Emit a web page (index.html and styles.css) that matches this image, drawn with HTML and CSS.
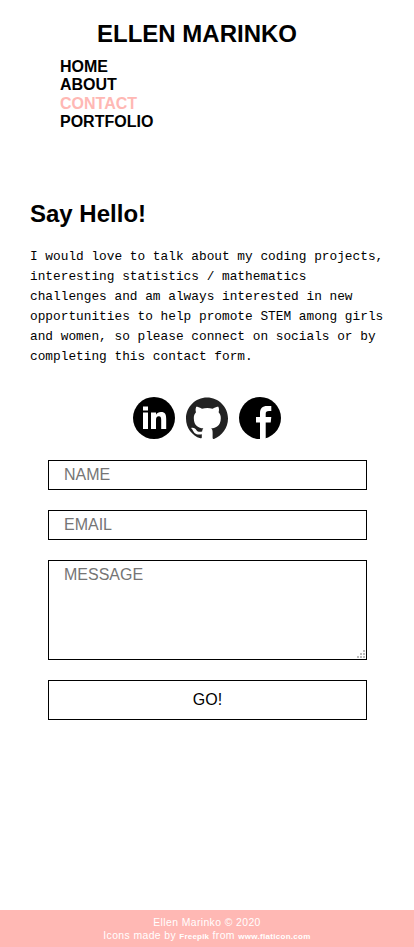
FILE: index.html
```html
<!DOCTYPE html>
<html lang="en">
<head>
<meta charset="utf-8">
<meta name="viewport" content="width=device-width, initial-scale=1">
<title>Ellen Marinko</title>
<link rel="stylesheet" href="styles.css">
</head>
<body>
<header>
  <h1>ELLEN MARINKO</h1>
  <nav>
    <a href="#">HOME</a>
    <a href="#">ABOUT</a>
    <a href="#" class="active">CONTACT</a>
    <a href="#">PORTFOLIO</a>
  </nav>
</header>
<main>
  <h2>Say Hello!</h2>
  <p>I would love to talk about my coding projects, interesting statistics / mathematics challenges and am always interested in new opportunities to help promote STEM among girls and women, so please connect on socials or by completing this contact form.</p>
  <div class="socials">
    <a href="#" aria-label="LinkedIn"><svg viewBox="0 0 42 42"><circle cx="21" cy="21" r="21"/><path fill="#fff" d="M10 15.500h5V32h-5zM10 9.500h5v4h-5zM18 15.500h5v2.300c1-1.700 2.700-2.700 5-2.700 4.200 0 5.200 2.600 5.200 7V32h-5v-8.800c0-2.400-.4-4-2.300-4-2.200 0-2.900 1.500-2.900 4V32h-5z"/></svg></a>
    <a href="#" aria-label="GitHub"><svg viewBox="0 0 42 42"><path fill="#222" d="M21 .4C9.400.4 0 9.800 0 21.400c0 9.300 6 17.200 14.400 19.900 1.100.2 1.400-.4 1.400-1v-3c-5.800 1.300-7.900-1.700-8.600-3.300-.8-1.700-1.600-2.400-2.200-3 2.600-1 4.500.700 5.500 2.200 1.200 1.800 3.200 2 5.600 1.300.2-1.400.7-2.700 1.300-3.200-4.700-.5-9.600-2.300-9.600-10.400 0-2.300.8-4.200 2.200-5.600-.2-.6-.9-2.700.2-5.600 0 0 1.800-.6 5.800 2.100a20 20 0 0 1 10.600 0c4-2.700 5.800-2.100 5.800-2.100 1.100 2.900.4 5 .2 5.600 1.400 1.400 2.200 3.300 2.200 5.600 0 8.100-4.900 9.900-9.600 10.400.8.700 1.400 1.900 1.400 3.900v5.800c0 .6.400 1.200 1.400 1C36 38.600 42 30.700 42 21.400 42 9.800 32.600.4 21 .4z"/></svg></a>
    <a href="#" aria-label="Facebook"><svg viewBox="0 0 42 42"><circle cx="21" cy="21" r="21"/><path fill="#fff" d="M21 43V25.500h-4v-5.500H21v-3.800C21 11.400 23.500 9 28 9h4.300v5h-2.300c-2.500 0-3.300.8-3.300 3v3h5.600l-.6 5.500H26.700V43z"/></svg></a>
  </div>
  <form>
    <input type="text" placeholder="NAME">
    <input type="email" placeholder="EMAIL">
    <div class="message">
      <textarea placeholder="MESSAGE"></textarea>
      <svg class="grip" viewBox="0 0 8 8"><path d="M0 6h2v2H0zM3 6h2v2H3zM6 6h2v2H6zM3 3h2v2H3zM6 3h2v2H6zM6 0h2v2H6z"/></svg>
    </div>
    <button type="button">GO!</button>
  </form>
</main>
<footer>
  <div>Ellen Marinko © 2020</div>
  <div>Icons made by <a href="#">Freepik</a> from <a href="#" class="site">www.flaticon.com</a></div>
</footer>
</body>
</html>
```
FILE: styles.css
```css
* { box-sizing: border-box; }
body {
  margin: 0;
  min-height: 947px;
  display: flex;
  flex-direction: column;
  background: #fff;
  color: #000;
  font-family: "Liberation Sans", Arial, sans-serif;
}
a { color: inherit; text-decoration: none; }
h1 {
  margin: 20px 20px 0 0;
  font-size: 24px;
  line-height: 28px;
  text-align: center;
}
nav {
  display: flex;
  flex-direction: column;
  margin: 10px 0 0 60px;
  font-size: 16px;
  font-weight: bold;
  line-height: 18.4px;
}
.active { color: #ffb8b4; }
main { flex: 1; padding: 0 30px; }
h2 { margin: 68px 0 0; font-size: 24px; line-height: 28px; }
p {
  margin: 19px -2px 0 0;
  font: 12.8px/20px "Liberation Mono", "Courier New", monospace;
}
.socials { display: flex; justify-content: center; gap: 11px; margin-top: 30px; }
.socials a, .socials svg { display: block; width: 42px; height: 42px; }
form { display: flex; flex-direction: column; gap: 20px; margin: 21px 17px 0 18px; }
input, textarea, button {
  display: block;
  width: 100%;
  margin: 0;
  border: 1px solid #000;
  border-radius: 0;
  background: #fff;
  font: 16px/18px "Liberation Sans", Arial, sans-serif;
}
input { height: 30px; padding: 0 15px; }
textarea { height: 100px; padding: 5px 15px; resize: none; }
::placeholder { color: #757575; }
button { height: 40px; padding: 0; color: #000; }
.message { position: relative; }
.grip { position: absolute; right: 2px; bottom: 2px; width: 8px; height: 8px; fill: #bbb; }
footer {
  height: 37px;
  padding-top: 6px;
  background: #ffb8b4;
  color: #fff;
  font-size: 10.4px;
  line-height: 13px;
  letter-spacing: 0.4px;
  text-align: center;
}
footer a { font-size: 8px; font-weight: bold; letter-spacing: 0.2px; }
footer .site { letter-spacing: 0.3px; }
```
